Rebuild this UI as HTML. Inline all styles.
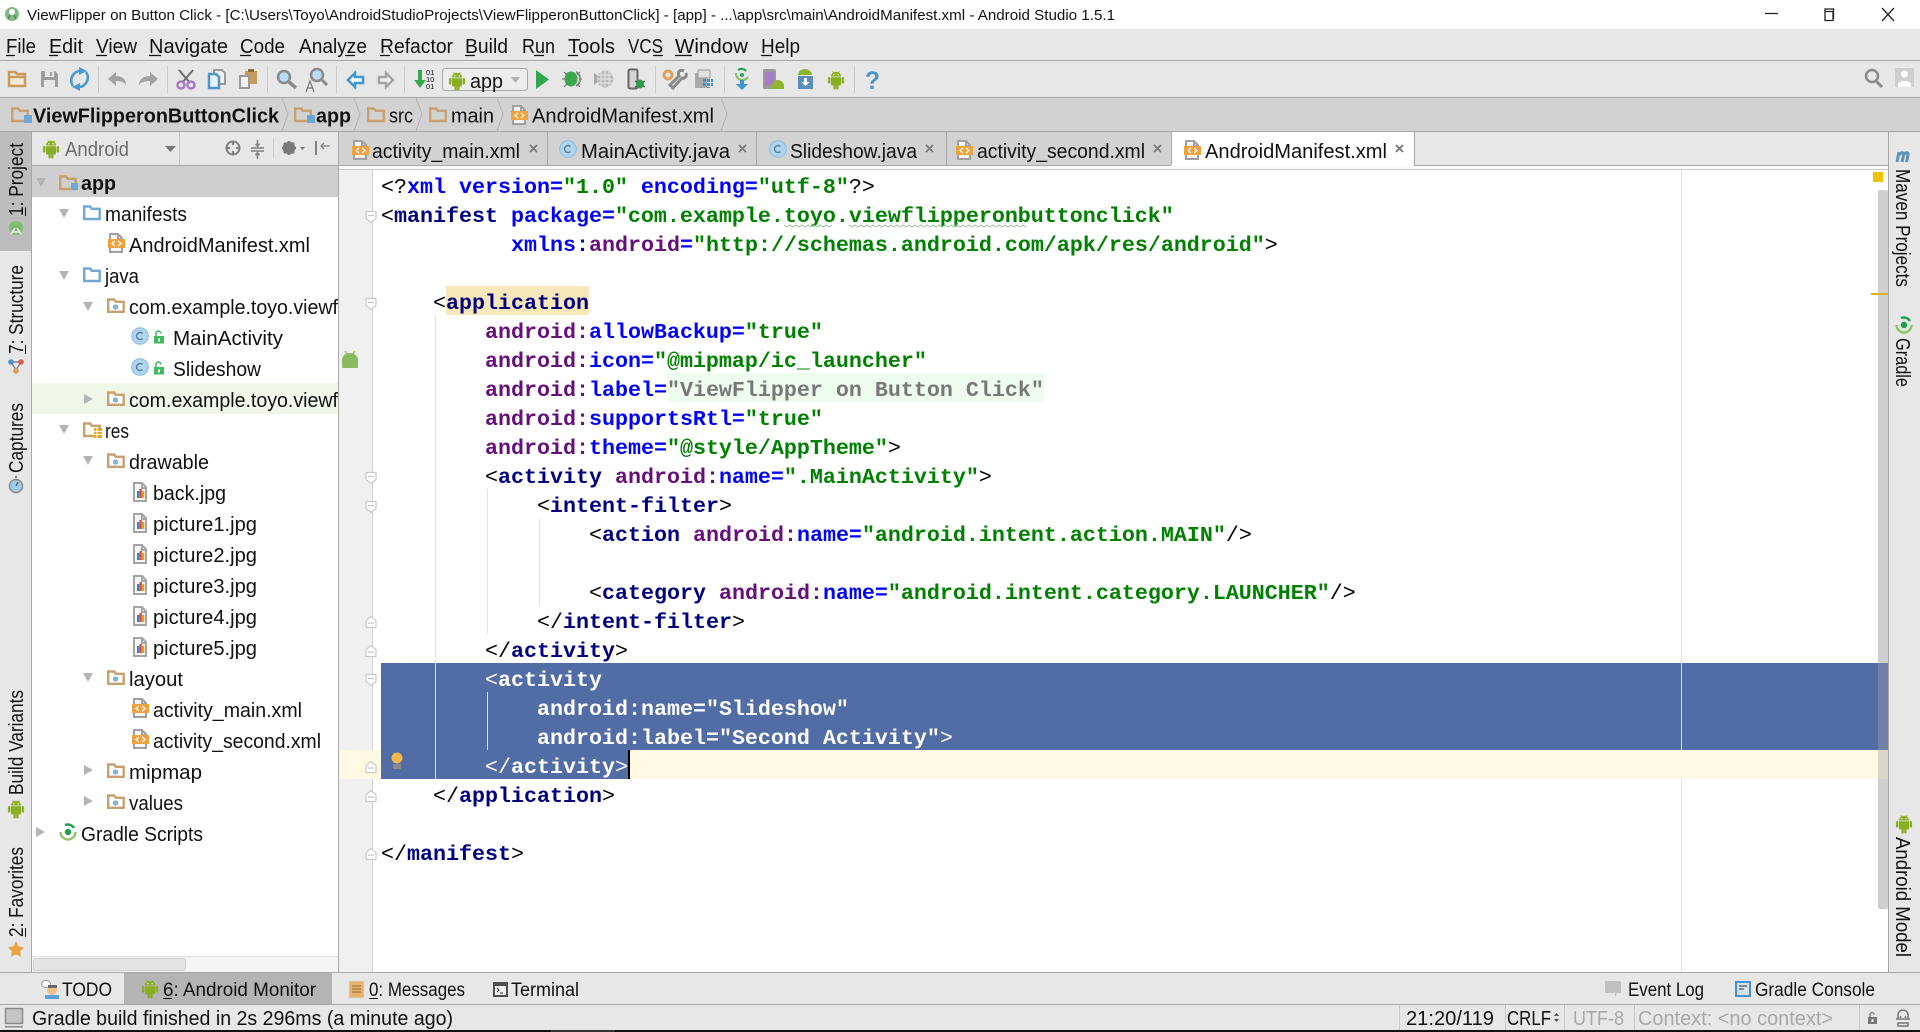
<!DOCTYPE html>
<html><head><meta charset="utf-8"><title>Android Studio</title>
<style>
html,body{margin:0;padding:0;background:#fff;overflow:hidden}
svg{display:block}
text{font-family:"Liberation Sans",Arial,sans-serif;font-size:20px;fill:#111;white-space:pre}
.c text,text.c{font-family:"Liberation Mono","Courier New",monospace;font-size:21.67px;font-weight:bold}
.p{fill:#000;font-weight:normal}.t{fill:#000080}.a{fill:#0000ff}.n{fill:#660e7a}.v{fill:#008000}.g{fill:#777}
.w text,.w tspan{fill:#fff}
</style></head><body>
<svg xmlns="http://www.w3.org/2000/svg" width="1920" height="1032" viewBox="0 0 1920 1032">
<defs>
<g id="droid"><g transform="scale(.85)"><path fill="#8aae22" d="M-6-3a6 5.500 0 0 1 12 0zM-6-2h12v8a1.500 1.500 0 0 1-1.500 1.500H3V11a1.400 1.400 0 0 1-2.800 0V7.500h-.4V11A1.400 1.400 0 0 1-3 11V7.500h-1.500A1.500 1.500 0 0 1-6 6zM-9.500-1a1.400 1.400 0 0 1 2.800 0v5a1.400 1.400 0 0 1-2.800 0zM6.700-1a1.400 1.400 0 0 1 2.800 0v5a1.400 1.400 0 0 1-2.800 0z"/><path stroke="#8aae22" d="M-4-9l1.500 2M4-9L2.500-7"/><circle cx="-2.500" cy="-5" r=".8" fill="#fff"/><circle cx="2.500" cy="-5" r=".8" fill="#fff"/></g></g>
<g id="xmlf"><path fill="#f4f4f4" stroke="#a0a0a0" stroke-width="2" d="M2 1h8l4 4v14H2z"/><path fill="#a0a0a0" d="M9 1h2v4h3v2H9z"/><rect x="0" y="6" width="17" height="9" fill="#f0a23c"/><path fill="none" stroke="#fff" stroke-width="1.200" d="M7 8l-3 2.500L7 13M10 8l3 2.500L10 13"/></g>
<g id="imgf"><path fill="#f6f6f6" stroke="#a4a4a4" stroke-width="2" d="M1 1h8l4 4v14H1z"/><path fill="#a4a4a4" d="M8 1h2v4h3v2H8z"/><rect x="4" y="9" width="2.300" height="7" fill="#3d7fc4"/><rect x="6.500" y="7" width="2.300" height="9" fill="#d84a3f"/><rect x="9" y="9" width="2.300" height="7" fill="#e0a030"/></g>
<g id="pkg"><path fill="#fff" stroke="#c8a070" stroke-width="2.400" d="M1.200 13.800V1.500h6l1.500 2.300h8v10z"/><rect x="6" y="6.500" width="5" height="5" rx="2" fill="#7fb4e0"/></g>
<g id="bfol"><path fill="#fff" stroke="#72a8d0" stroke-width="2.400" d="M1.200 14V1.500h6l1.500 2.300h8V14z"/></g>
<g id="tfol"><path fill="none" stroke="#c8a070" stroke-width="2.400" d="M1.200 14V1.500h6l1.500 2.300h8V14z"/></g>
<g id="cls"><circle r="8.300" fill="#aed5f0" stroke="#8cbbdc"/><path fill="none" stroke="#5c7f99" stroke-width="1.400" d="M2.500-2.500a3.500 3.500 0 1 0 0 5"/></g>
<g id="lock"><rect x="0" y="5" width="10" height="7.500" fill="#42b862"/><path fill="none" stroke="#42b862" stroke-width="1.600" d="M2 5V2.500a2.400 2.400 0 0 1 4.800 0"/><rect x="4" y="7.500" width="2" height="3" fill="#fff"/></g>
<path id="fd" fill="#fff" stroke="#c8c8c8" stroke-width="1.200" d="M-5-5.500h10v7l-5 4-5-4zM-3-1.500h6"/>
<path id="fu" fill="#fff" stroke="#c8c8c8" stroke-width="1.200" d="M-5 5.500h10v-7l-5-4-5 4zM-3 1h6"/>
<path id="dn" fill="#b4b4b4" d="M0 0h10L5 9z"/>
<path id="rt" fill="#b4b4b4" d="M0 0l9 5-9 5z"/>
<g id="grd"><circle r="3.200" fill="#1f9e4e"/><path fill="none" stroke="#8fc46a" stroke-width="2.400" d="M-7.500 0a7.500 7.500 0 0 0 15 0"/><path fill="none" stroke="#1f9e4e" stroke-width="2.400" d="M-3-7a7.500 7.500 0 0 1 9 3"/></g>
</defs>

<rect width="1920" height="1032" fill="#e7e7e7"/>
<!-- title bar -->
<rect width="1920" height="29" fill="#fff"/>
<circle cx="12" cy="14" r="7" fill="#86b98a"/><circle cx="12" cy="12" r="3" fill="#fff"/><path stroke="#4c8c4e" stroke-width="1.500" d="M8 19l2-4M16 19l-2-4"/>
<text x="27" y="20" font-size="15" style="font-size:15px" textLength="1088" lengthAdjust="spacingAndGlyphs">ViewFlipper on Button Click - [C:\Users\Toyo\AndroidStudioProjects\ViewFlipperonButtonClick] - [app] - ...\app\src\main\AndroidManifest.xml - Android Studio 1.5.1</text>
<path stroke="#222" stroke-width="1.300" fill="none" d="M1765 13.500h13M1825 11.500h8v9h-8zM1825 11.500v-2.500h8.500v9.500H1833M1882 8l12 13M1894 8l-12 13"/>

<!-- menu -->
<rect y="29" width="1920" height="31" fill="#e7e7e7"/>
<rect y="60" width="1920" height="1" fill="#a8a8a8"/>
<text x="6" y="53" textLength="30" lengthAdjust="spacingAndGlyphs">File</text>
<text x="49" y="53" textLength="34" lengthAdjust="spacingAndGlyphs">Edit</text>
<text x="96" y="53" textLength="41" lengthAdjust="spacingAndGlyphs">View</text>
<text x="149" y="53" textLength="79" lengthAdjust="spacingAndGlyphs">Navigate</text>
<text x="240" y="53" textLength="45" lengthAdjust="spacingAndGlyphs">Code</text>
<text x="299" y="53" textLength="68" lengthAdjust="spacingAndGlyphs">Analyze</text>
<text x="380" y="53" textLength="73" lengthAdjust="spacingAndGlyphs">Refactor</text>
<text x="465" y="53" textLength="43" lengthAdjust="spacingAndGlyphs">Build</text>
<text x="522" y="53" textLength="33" lengthAdjust="spacingAndGlyphs">Run</text>
<text x="568" y="53" textLength="47" lengthAdjust="spacingAndGlyphs">Tools</text>
<text x="628" y="53" textLength="35" lengthAdjust="spacingAndGlyphs">VCS</text>
<text x="675" y="53" textLength="73" lengthAdjust="spacingAndGlyphs">Window</text>
<text x="761" y="53" textLength="39" lengthAdjust="spacingAndGlyphs">Help</text>
<path stroke="#111" stroke-width="1.200" d="M6 55.500h9M49 55.500h9M96 55.500h11M149 55.500h12M240 55.500h11M345 55.500h10M380 55.500h10M465 55.500h10M534 55.500h10M568 55.500h10M653 55.500h10M675 55.500h17M761 55.500h11"/>

<!-- toolbar -->
<rect y="61" width="1920" height="36" fill="#e7e7e7"/>
<rect y="97" width="1920" height="1" fill="#a8a8a8"/>
<path stroke="#c9c9c9" d="M98.500 66v27M167.500 66v27M267.500 66v27M336.500 66v27M404.500 66v27M655.500 66v27M724.500 66v27M854.500 66v27"/>
<!-- folder --><path fill="#f5e9d8" stroke="#c99a5e" stroke-width="2.500" d="M9 86V72h6l2 2h8v12z"/><path stroke="#c99a5e" stroke-width="2.500" d="M9 77h16"/>
<!-- save --><path fill="#9c9c9c" d="M41 71h14l3 3v13H41z"/><rect x="45" y="71" width="9" height="6" fill="#e7e7e7"/><rect x="44" y="80" width="11" height="7" fill="#e7e7e7"/><rect x="50" y="72" width="2" height="4" fill="#9c9c9c"/>
<!-- sync --><path fill="none" stroke="#4a9ad0" stroke-width="2.600" d="M73 86a9.500 9.500 0 0 1 7-15M86 72a9.500 9.500 0 0 1-7 15"/><path fill="#4a9ad0" d="M79 67l8 4-8 4zM80 91l-8-4 8-4z"/>
<!-- undo --><path fill="#a2a2a2" d="M108 79l8-7v4c6 0 10 3 10 9-2-3-5-4-10-4v5z"/>
<!-- redo --><path fill="#a2a2a2" d="M158 79l-8-7v4c-6 0-11 3-11 9 2-3 6-4 11-4v5z"/>
<!-- cut --><path stroke="#6e6e6e" stroke-width="2" d="M179 70l11 13M193 70l-11 13"/><circle cx="181" cy="85" r="3.500" fill="none" stroke="#a878c8" stroke-width="2.500"/><circle cx="191" cy="85" r="3.500" fill="none" stroke="#a878c8" stroke-width="2.500"/>
<!-- copy --><path fill="#f2f2f2" stroke="#9a9a9a" stroke-width="2" d="M214 70h8l3 3v11h-11z"/><path fill="#e8f2fa" stroke="#4e94c8" stroke-width="2.500" d="M209 74h7l3 3v11h-10z"/>
<!-- paste --><rect x="245" y="71" width="12" height="13" fill="#c99a5e"/><rect x="248" y="69" width="6" height="3" fill="#8d6b3f"/><rect x="240" y="76" width="9" height="12" fill="#f2f2f2" stroke="#9a9a9a" stroke-width="2"/>
<!-- find --><circle cx="284" cy="77" r="6" fill="#bcdcf0" stroke="#8a8a8a" stroke-width="2.500"/><path stroke="#8a8a8a" stroke-width="3.500" d="M289 82l7 6"/>
<!-- replace --><circle cx="317" cy="75" r="6" fill="#bcdcf0" stroke="#8a8a8a" stroke-width="2.500"/><path stroke="#8a8a8a" stroke-width="3" d="M322 80l5 5"/><path fill="none" stroke="#777" stroke-width="1.200" d="M306 92l4-11 4 11M307.500 88h5"/>
<!-- back/fwd --><path fill="#fff" stroke="#3b96d2" stroke-width="2.500" d="M348 80l7-7v4h8v6h-8v4z"/><path fill="#f0f0f0" stroke="#a4a4a4" stroke-width="2.500" d="M393 80l-7-7v4h-7v6h7v4z"/>
<!-- make --><path fill="#3aa84a" d="M418 70h4v10h4l-6 8-6-8h4z"/>
<text x="426" y="75" style="font-size:7.500px" fill="#666">01</text><text x="426" y="82" style="font-size:7.500px" fill="#666">10</text><text x="426" y="89" style="font-size:7.500px" fill="#666">01</text>
<!-- combo --><rect x="442.500" y="68.500" width="85" height="22" rx="3" fill="#ededed" stroke="#a8a8a8"/>
<use href="#droid" x="457" y="80"/>
<text x="470" y="88" textLength="33" lengthAdjust="spacingAndGlyphs">app</text>
<path fill="#b0b0b0" d="M511 77h9l-4.500 6z"/>
<!-- run --><path fill="#31a84f" d="M536 70l13 9.500-13 9.500z"/>
<!-- debug --><ellipse cx="571" cy="79" rx="6.500" ry="7.500" fill="#39a84d"/><path stroke="#666" d="M564 72l3 3M580 72l-3 3M562 79h3M579 79h3M564 87l3-3M580 87l-3-3"/><path fill="none" stroke="#888" stroke-width="2" d="M576 72a8 8 0 0 1 0 14"/>
<!-- coverage --><path fill="#a8a8a8" d="M594 73l8 6-8 6z"/><circle cx="605" cy="79" r="8.500" fill="#bbb"/><path stroke="#e7e7e7" d="M597 75h16M597 79h16M597 83h16M601 71v16M605 71v16M609 71v16"/>
<!-- attach --><rect x="628.500" y="69.500" width="9" height="19" rx="1.500" fill="#d4d4d4" stroke="#666" stroke-width="2"/><ellipse cx="640" cy="84" rx="4" ry="4.500" fill="#2e9e44"/><path stroke="#444" d="M635 81l2 1M645 81l-2 1M635 87l2-1M645 87l-2-1"/>
<!-- sdk settings --><circle cx="668" cy="75" r="4" fill="none" stroke="#e0a060" stroke-width="3"/><path fill="none" stroke="#8a8a8a" stroke-width="3" d="M684 71c-4-2-7 1-5 5l-9 9 3 3 9-10c3 1 5-2 4-5"/>
<!-- structure --><rect x="695" y="73" width="12" height="15" fill="#aaa"/><rect x="698" y="70" width="12" height="8" fill="#e0e0e0" stroke="#999"/><path fill="#3f94cc" d="M703 79h3v3h-3zM707 79h3v3h-3zM711 79h2v3h-2zM703 83h3v3h-3zM707 83h3v3h-3zM711 83h2v3h-2zM707 87h3v1h-3z"/>
<!-- sync gradle --><circle cx="742" cy="75" r="2" fill="#27a35a"/><path fill="none" stroke="#86c46e" stroke-width="2.200" d="M736 73a6.500 6.500 0 0 0 12 4"/><path fill="none" stroke="#27a35a" stroke-width="2.200" d="M738 70a6 6 0 0 1 8 1"/><path fill="#3c96d0" d="M740 80h4v4h4l-6 6-6-6h4z"/>
<!-- avd --><rect x="763" y="69" width="13" height="20" rx="1.500" fill="#9a9a9a"/><rect x="765" y="72" width="9" height="13" fill="#a87cc8"/><path fill="#8fb52e" d="M772 89v-3a6 6 0 0 1 12 0v3z"/>
<!-- sdk --><path fill="#8fb52e" d="M798 75a7 6 0 0 1 14 0z"/><rect x="798" y="76" width="15" height="13" fill="#5a8db8"/><path fill="#fff" d="M804 78h3v4h2.500l-4 4-4-4h2.500z"/>
<use href="#droid" x="836" y="79"/>
<text x="865" y="89" style="font-size:25px;font-weight:bold;fill:#4a94cc" textLength="15" lengthAdjust="spacingAndGlyphs">?</text>
<circle cx="1872" cy="76" r="6" fill="none" stroke="#8a8a8a" stroke-width="2.500"/><path stroke="#8a8a8a" stroke-width="3" d="M1876 81l6 6"/>
<rect x="1895" y="68" width="19" height="19" fill="#cfcfcf"/><circle cx="1904.500" cy="74" r="3.500" fill="#fff"/><path fill="#fff" d="M1898 87v-3c0-4 13-4 13 0v3z"/>

<!-- navbar -->
<rect y="98" width="1920" height="33" fill="#d2d2d2"/>
<rect y="131" width="1920" height="1" fill="#a8a8a8"/>
<path fill="none" stroke="#b2b2b2" d="M282 98l6 16-6 17M354 98l6 16-6 17M416 98l6 16-6 17M497 98l6 16-6 17M721 98l6 16-6 17"/>
<use href="#tfol" x="11" y="107"/><rect x="24" y="115" width="8" height="8" fill="#6aa8d8"/>
<text x="33" y="122.500" font-weight="bold" textLength="246" lengthAdjust="spacingAndGlyphs">ViewFlipperonButtonClick</text>
<use href="#tfol" x="294" y="107"/><rect x="307" y="115" width="8" height="8" fill="#6aa8d8"/>
<text x="316" y="122.500" font-weight="bold" textLength="35" lengthAdjust="spacingAndGlyphs">app</text>
<use href="#tfol" transform="translate(367 107)"/><text x="389" y="122.500" textLength="24" lengthAdjust="spacingAndGlyphs">src</text>
<use href="#tfol" transform="translate(429 107)"/><text x="451" y="122.500" textLength="43" lengthAdjust="spacingAndGlyphs">main</text>
<use href="#xmlf" x="511" y="105"/>
<text x="532" y="122.500" textLength="182" lengthAdjust="spacingAndGlyphs">AndroidManifest.xml</text>

<!-- tabs row -->
<rect y="132" x="32" width="1856" height="33" fill="#e7e7e7"/>
<rect x="339" y="132" width="608" height="33" fill="#d2d2d2"/>
<rect x="947" y="132" width="224" height="33" fill="#d2d2d2"/>
<rect x="1171" y="132" width="243" height="34" fill="#fff"/>
<rect x="32" y="165" width="1856" height="1" fill="#a8a8a8"/>
<rect x="1171" y="165" width="243" height="1" fill="#fff"/>
<rect x="339" y="166" width="1549" height="3" fill="#fafafa"/>
<rect x="339" y="169" width="1549" height="1" fill="#cdcdcd"/>
<path stroke="#a8a8a8" d="M547.500 132v33M756.500 132v33M946.500 132v33M1171.500 132v33M1414.500 132v33"/>
<use href="#xmlf" x="352" y="140"/><text x="372" y="158" textLength="148" lengthAdjust="spacingAndGlyphs">activity_main.xml</text>
<use href="#cls" x="568" y="149"/><text x="581" y="158" textLength="149" lengthAdjust="spacingAndGlyphs">MainActivity.java</text>
<use href="#cls" x="778" y="149"/><text x="790" y="158" textLength="127" lengthAdjust="spacingAndGlyphs">Slideshow.java</text>
<use href="#xmlf" x="956" y="140"/><text x="977" y="158" textLength="168" lengthAdjust="spacingAndGlyphs">activity_second.xml</text>
<use href="#xmlf" x="1184" y="140"/><text x="1205" y="158" textLength="182" lengthAdjust="spacingAndGlyphs">AndroidManifest.xml</text>
<path stroke="#777" stroke-width="1.800" d="M530 145l7 7M537 145l-7 7M739 145l7 7M746 145l-7 7M926 145l7 7M933 145l-7 7M1154 145l7 7M1161 145l-7 7M1396 145l7 7M1403 145l-7 7"/>

<!-- left side strip -->
<rect y="132" width="31" height="840" fill="#e7e7e7"/>
<rect y="132" width="31" height="119" fill="#bdbdbd"/>
<rect x="31" y="132" width="1" height="840" fill="#a8a8a8"/>
<text transform="translate(23 216) rotate(-90)" textLength="73" lengthAdjust="spacingAndGlyphs">1: Project</text>
<path stroke="#111" d="M25.500 216v-9M25.500 354v-9M25.500 937v-9"/>
<circle cx="16" cy="228" r="7" fill="#7fbe6e"/><path stroke="#eee" stroke-width="1.500" d="M11 234l4-6M21 234l-4-6M12 232h8"/>
<text transform="translate(23 354) rotate(-90)" textLength="89" lengthAdjust="spacingAndGlyphs">7: Structure</text>
<path stroke="#8a8a8a" stroke-width="1.500" fill="none" d="M11 362l5 8 5-8z"/><circle cx="11" cy="362" r="2.800" fill="#4a90d0"/><circle cx="21" cy="362" r="2.800" fill="#d85a4a"/><circle cx="16" cy="371" r="2.800" fill="#e0a050"/>
<text transform="translate(23 473) rotate(-90)" textLength="70" lengthAdjust="spacingAndGlyphs">Captures</text>
<circle cx="16" cy="486" r="6.500" fill="#9ecbe8" stroke="#8a8a8a" stroke-width="1.500"/><path stroke="#555" stroke-width="1.300" d="M16 486l2-4M16 478v-2"/>
<text transform="translate(23 795) rotate(-90)" textLength="105" lengthAdjust="spacingAndGlyphs">Build Variants</text>
<use href="#droid" x="16" y="808"/>
<text transform="translate(23 937) rotate(-90)" textLength="90" lengthAdjust="spacingAndGlyphs">2: Favorites</text>
<path fill="#e8a33d" d="M16 941l2.500 5.500 5.500.7-4 4 1 5.800-5-2.900-5 2.900 1-5.800-4-4 5.500-.7z"/>

<!-- project panel -->
<rect x="32" y="166" width="306" height="806" fill="#fff"/>
<rect x="338" y="132" width="1" height="840" fill="#a8a8a8"/>
<rect x="179" y="132" width="1" height="33" fill="#c4c4c4"/>
<use href="#droid" x="51" y="148"/>
<text x="65" y="156" textLength="64" lengthAdjust="spacingAndGlyphs" style="fill:#6c6c6c">Android</text>
<path fill="#777" d="M165 146h11l-5.500 6z"/>
<circle cx="233" cy="148" r="6.500" fill="none" stroke="#808080" stroke-width="2"/><path stroke="#808080" stroke-width="2" d="M233 141v4M233 151v4M226 148h4M236 148h4"/>
<path stroke="#808080" stroke-width="1.600" fill="none" d="M251 148h13M251 151h13M257.500 140v6l-2-2M257.500 146l2-2M257.500 159v-6l-2 2M257.500 153l2 2"/>
<path stroke="#ccc" d="M273.500 138v20"/>
<circle cx="289" cy="148" r="4.500" fill="none" stroke="#787878" stroke-width="3.500"/><path stroke="#787878" stroke-width="2.500" d="M289 141v14M282 148h14M284 143l10 10M294 143l-10 10"/><path fill="#787878" d="M300 147h5l-2.500 3z"/>
<path stroke="#808080" stroke-width="2" fill="none" d="M316 141v14"/><path stroke="#808080" stroke-width="1.300" fill="none" d="M330 146h-9M324 143l-3 3 3 3"/>

<!-- tree -->
<rect x="32" y="166" width="306" height="31" fill="#cfcfcf"/>
<rect x="32" y="383" width="306" height="31" fill="#f0f7e9"/>
<use href="#dn" x="36" y="178"/><use href="#tfol" x="59" y="175"/><rect x="71" y="183" width="7" height="7" fill="#6aa8d8"/>
<text x="81" y="190" font-weight="bold" textLength="35" lengthAdjust="spacingAndGlyphs">app</text>
<use href="#dn" x="59" y="209"/><use href="#bfol" x="83" y="205"/><text x="105" y="221" textLength="82" lengthAdjust="spacingAndGlyphs">manifests</text>
<use href="#xmlf" x="108" y="233"/><text x="129" y="252" textLength="181" lengthAdjust="spacingAndGlyphs">AndroidManifest.xml</text>
<use href="#dn" x="59" y="271"/><use href="#bfol" x="83" y="267"/><text x="105" y="283" textLength="34" lengthAdjust="spacingAndGlyphs">java</text>
<use href="#dn" x="83" y="302"/><use href="#pkg" x="107" y="298"/><text x="129" y="314" textLength="209" lengthAdjust="spacingAndGlyphs">com.example.toyo.viewf</text>
<use href="#cls" x="140" y="336"/><use href="#lock" x="154" y="331"/><text x="173" y="345" textLength="110" lengthAdjust="spacingAndGlyphs">MainActivity</text>
<use href="#cls" x="140" y="367"/><use href="#lock" x="154" y="362"/><text x="173" y="376" textLength="88" lengthAdjust="spacingAndGlyphs">Slideshow</text>
<use href="#rt" x="84" y="394"/><use href="#pkg" x="107" y="391"/><text x="129" y="407" textLength="209" lengthAdjust="spacingAndGlyphs">com.example.toyo.viewf</text>
<use href="#dn" x="59" y="425"/><use href="#tfol" x="83" y="422"/><path fill="#e8a820" d="M94 428h8v10h-8z"/><path stroke="#fff" d="M94 431.500h8M94 434.500h8M97 428v10"/><text x="105" y="438" textLength="24" lengthAdjust="spacingAndGlyphs">res</text>
<use href="#dn" x="83" y="456"/><use href="#pkg" x="107" y="453"/><text x="129" y="469" textLength="80" lengthAdjust="spacingAndGlyphs">drawable</text>
<use href="#imgf" x="133" y="482"/><text x="153" y="500" textLength="73" lengthAdjust="spacingAndGlyphs">back.jpg</text>
<use href="#imgf" x="133" y="513"/><text x="153" y="531" textLength="104" lengthAdjust="spacingAndGlyphs">picture1.jpg</text>
<use href="#imgf" x="133" y="544"/><text x="153" y="562" textLength="104" lengthAdjust="spacingAndGlyphs">picture2.jpg</text>
<use href="#imgf" x="133" y="575"/><text x="153" y="593" textLength="104" lengthAdjust="spacingAndGlyphs">picture3.jpg</text>
<use href="#imgf" x="133" y="606"/><text x="153" y="624" textLength="104" lengthAdjust="spacingAndGlyphs">picture4.jpg</text>
<use href="#imgf" x="133" y="637"/><text x="153" y="655" textLength="104" lengthAdjust="spacingAndGlyphs">picture5.jpg</text>
<use href="#dn" x="83" y="673"/><use href="#pkg" x="107" y="670"/><text x="129" y="686" textLength="54" lengthAdjust="spacingAndGlyphs">layout</text>
<use href="#xmlf" x="132" y="698"/><text x="153" y="717" textLength="149" lengthAdjust="spacingAndGlyphs">activity_main.xml</text>
<use href="#xmlf" x="132" y="729"/><text x="153" y="748" textLength="168" lengthAdjust="spacingAndGlyphs">activity_second.xml</text>
<use href="#rt" x="84" y="765"/><use href="#pkg" x="107" y="763"/><text x="129" y="779" textLength="73" lengthAdjust="spacingAndGlyphs">mipmap</text>
<use href="#rt" x="84" y="796"/><use href="#pkg" x="107" y="794"/><text x="129" y="810" textLength="54" lengthAdjust="spacingAndGlyphs">values</text>
<use href="#rt" x="36" y="827"/><use href="#grd" x="68" y="832"/><text x="81" y="841" textLength="122" lengthAdjust="spacingAndGlyphs">Gradle Scripts</text>
<rect x="32" y="956" width="306" height="16" fill="#f5f5f5"/><rect x="32" y="956" width="306" height="1" fill="#e2e2e2"/>
<rect x="33.500" y="958.500" width="152" height="12" rx="2" fill="#e4e4e4" stroke="#cfcfcf"/>

<!-- editor -->
<rect x="339" y="170" width="1549" height="802" fill="#fff"/>
<rect x="339" y="170" width="33" height="802" fill="#f0f0f0"/>
<rect x="372" y="170" width="1" height="802" fill="#d4d4d4"/>
<rect x="339" y="750" width="1549" height="29" fill="#fff8e2"/>
<rect x="381" y="663" width="1507" height="87" fill="#526da5"/>
<rect x="381" y="750" width="247" height="29" fill="#526da5"/>
<rect x="667" y="373" width="377" height="29" fill="#edfcec"/>
<rect x="446" y="286" width="143" height="29" fill="#f8e8b9"/>
<path stroke="#e2e2e2" d="M1681.500 170V663M1681.500 779V972M435.500 315V663M487.500 489V634M539.500 518V605"/>
<path stroke="#dbe2f0" d="M1681.500 663V750M435.500 663V779M487.500 692V750"/>
<path stroke="#8abb60" stroke-width="1.200" d="M345 351l2 3M355 351l-2 3"/><path fill="#8abb60" d="M342 367v-7a8 7 0 0 1 16 0v7a1 1 0 0 1-1 1h-14a1 1 0 0 1-1-1z"/>
<circle cx="397" cy="758" r="5.500" fill="#f2b84a"/><rect x="393" y="764" width="8" height="5" fill="#8a8a8a"/>
<use href="#fd" x="371" y="217"/><use href="#fd" x="371" y="304"/><use href="#fd" x="371" y="478"/><use href="#fd" x="371" y="507"/>
<use href="#fu" x="371" y="622"/><use href="#fu" x="371" y="651"/><use href="#fd" x="371" y="680"/><use href="#fu" x="371" y="767"/><use href="#fu" x="371" y="796"/><use href="#fu" x="371" y="854"/>
<g class="c">
<text x="381" y="193"><tspan class="p">&lt;?</tspan><tspan class="a">xml version=</tspan><tspan class="v">"1.0"</tspan><tspan class="a"> encoding=</tspan><tspan class="v">"utf-8"</tspan><tspan class="p">?&gt;</tspan></text>
<text x="381" y="222"><tspan class="p">&lt;</tspan><tspan class="t">manifest </tspan><tspan class="a">package=</tspan><tspan class="v">"com.example.toyo.viewflipperonbuttonclick"</tspan></text>
<text x="511" y="251"><tspan class="a">xmlns:</tspan><tspan class="n">android</tspan><tspan class="a">=</tspan><tspan class="v">"http://schemas.android.com/apk/res/android"</tspan><tspan class="p">&gt;</tspan></text>
<text x="433" y="309"><tspan class="p">&lt;</tspan><tspan class="t">application</tspan></text>
<text x="485" y="338"><tspan class="n">android:</tspan><tspan class="a">allowBackup=</tspan><tspan class="v">"true"</tspan></text>
<text x="485" y="367"><tspan class="n">android:</tspan><tspan class="a">icon=</tspan><tspan class="v">"@mipmap/ic_launcher"</tspan></text>
<text x="485" y="396"><tspan class="n">android:</tspan><tspan class="a">label=</tspan><tspan class="g">"ViewFlipper on Button Click"</tspan></text>
<text x="485" y="425"><tspan class="n">android:</tspan><tspan class="a">supportsRtl=</tspan><tspan class="v">"true"</tspan></text>
<text x="485" y="454"><tspan class="n">android:</tspan><tspan class="a">theme=</tspan><tspan class="v">"@style/AppTheme"</tspan><tspan class="p">&gt;</tspan></text>
<text x="485" y="483"><tspan class="p">&lt;</tspan><tspan class="t">activity </tspan><tspan class="n">android:</tspan><tspan class="a">name=</tspan><tspan class="v">".MainActivity"</tspan><tspan class="p">&gt;</tspan></text>
<text x="537" y="512"><tspan class="p">&lt;</tspan><tspan class="t">intent-filter</tspan><tspan class="p">&gt;</tspan></text>
<text x="589" y="541"><tspan class="p">&lt;</tspan><tspan class="t">action </tspan><tspan class="n">android:</tspan><tspan class="a">name=</tspan><tspan class="v">"android.intent.action.MAIN"</tspan><tspan class="p">/&gt;</tspan></text>
<text x="589" y="599"><tspan class="p">&lt;</tspan><tspan class="t">category </tspan><tspan class="n">android:</tspan><tspan class="a">name=</tspan><tspan class="v">"android.intent.category.LAUNCHER"</tspan><tspan class="p">/&gt;</tspan></text>
<text x="537" y="628"><tspan class="p">&lt;/</tspan><tspan class="t">intent-filter</tspan><tspan class="p">&gt;</tspan></text>
<text x="485" y="657"><tspan class="p">&lt;/</tspan><tspan class="t">activity</tspan><tspan class="p">&gt;</tspan></text>
<g class="w">
<text x="485" y="686"><tspan font-weight="normal">&lt;</tspan>activity</text>
<text x="537" y="715">android:name="Slideshow"</text>
<text x="537" y="744">android:label="Second Activity"<tspan font-weight="normal">&gt;</tspan></text>
<text x="485" y="773"><tspan font-weight="normal">&lt;/</tspan>activity<tspan font-weight="normal">&gt;</tspan></text>
</g>
<text x="433" y="802"><tspan class="p">&lt;/</tspan><tspan class="t">application</tspan><tspan class="p">&gt;</tspan></text>
<text x="381" y="860"><tspan class="p">&lt;/</tspan><tspan class="t">manifest</tspan><tspan class="p">&gt;</tspan></text>
</g>
<path fill="none" stroke="#9dc29d" d="M784 225l3 2 3-2 3 2 3-2 3 2 3-2 3 2 3-2 3 2 3-2 3 2 3-2 3 2 3-2 3 2 3-2M849 225l3 2 3-2 3 2 3-2 3 2 3-2 3 2 3-2 3 2 3-2 3 2 3-2 3 2 3-2 3 2 3-2 3 2 3-2 3 2 3-2 3 2 3-2 3 2 3-2 3 2 3-2 3 2 3-2 3 2 3-2 3 2 3-2 3 2 3-2 3 2 3-2 3 2 3-2 3 2 3-2 3 2 3-2 3 2 3-2 3 2 3-2 3 2 3-2 3 2 3-2 3 2 3-2 3 2 3-2 3 2 3-2 3 2 3-2 3 2"/>
<rect x="628" y="750" width="2" height="29" fill="#000"/>
<!-- translucent scrollbar -->
<rect x="1878" y="190" width="10" height="719" rx="2" fill="#cfcfcf"/>
<rect x="1878" y="663" width="10" height="87" fill="#7080a6"/>
<rect x="1878" y="750" width="10" height="29" fill="#dbd7c7"/>
<rect x="1873" y="172" width="10" height="10" fill="#efc300"/>
<rect x="1871" y="293" width="17" height="2" fill="#e0b21a"/>

<!-- right strip -->
<rect x="1888" y="132" width="1" height="840" fill="#a8a8a8"/>
<rect x="1889" y="132" width="31" height="840" fill="#e7e7e7"/>
<path fill="none" stroke="#5f94b4" stroke-width="3" d="M1897 162l2-10M1899 155c2-3 5-3 4.500 0l-1.500 7M1903.500 155c2-3 5-3 4.500 0l-1.500 7"/>
<text transform="translate(1896 169) rotate(90)" textLength="118" lengthAdjust="spacingAndGlyphs">Maven Projects</text>
<use href="#grd" x="1904" y="325"/>
<text transform="translate(1896 338) rotate(90)" textLength="49" lengthAdjust="spacingAndGlyphs">Gradle</text>
<use href="#droid" transform="translate(1904 823)"/>
<text transform="translate(1896 837) rotate(90)" textLength="120" lengthAdjust="spacingAndGlyphs">Android Model</text>

<!-- bottom tool bar -->
<rect y="972" width="1920" height="1" fill="#a8a8a8"/>
<rect y="973" width="1920" height="31" fill="#e7e7e7"/>
<rect x="124" y="973" width="208" height="31" fill="#b4b4b4"/>
<rect y="1004" width="1920" height="1" fill="#a8a8a8"/>
<circle cx="52" cy="990" r="5" fill="#f0c088"/><rect x="45" y="995" width="14" height="4" fill="#5aa0d8"/><ellipse cx="46" cy="984" rx="4.500" ry="3.500" fill="#fff" stroke="#999"/><path fill="#666" d="M48 985h9v3h-9z"/>
<text x="62" y="996" style="font-size:19px" textLength="50" lengthAdjust="spacingAndGlyphs">TODO</text>
<use href="#droid" x="150" y="988"/>
<text x="163" y="996" style="font-size:19px" textLength="153" lengthAdjust="spacingAndGlyphs">6: Android Monitor</text>
<path stroke="#111" d="M163 998.500h9M369 998.500h9"/>
<rect x="349" y="981" width="15" height="17" fill="#eab06a" stroke="#d8d8d8"/><path stroke="#8a6a3a" d="M352 986h9M352 989h9M352 992h9"/>
<text x="369" y="996" style="font-size:19px" textLength="96" lengthAdjust="spacingAndGlyphs">0: Messages</text>
<rect x="493" y="982" width="15" height="15" fill="#4f4f4f"/><rect x="495" y="986" width="11" height="9" fill="#eee"/><path stroke="#333" fill="none" d="M497 988l2 2-2 2M500 993h3"/>
<text x="511" y="996" style="font-size:19px" textLength="68" lengthAdjust="spacingAndGlyphs">Terminal</text>
<path fill="#c0c0c0" d="M1606 981h14a1 1 0 0 1 1 1v11h-4l-2 4v-4h-9a1 1 0 0 1-1-1v-10a1 1 0 0 1 1-1z"/>
<text x="1628" y="996" style="font-size:19px" textLength="76" lengthAdjust="spacingAndGlyphs">Event Log</text>
<rect x="1736" y="982" width="14" height="14" fill="#d0e2ef" stroke="#4a90c8" stroke-width="2"/><path stroke="#6a6a6a" stroke-width="1.500" d="M1739 986h8M1739 989h5"/>
<text x="1755" y="996" style="font-size:19px" textLength="120" lengthAdjust="spacingAndGlyphs">Gradle Console</text>

<!-- status -->
<rect y="1005" width="1920" height="25" fill="#e7e7e7"/>
<rect y="1030" width="1920" height="2" fill="#111"/>
<rect x="551" y="1030" width="64" height="2" fill="#333"/>
<rect x="5.500" y="1008.500" width="17" height="15" fill="#c4c4c4" stroke="#8a8a8a" stroke-width="1.500"/><rect x="5" y="1026" width="18" height="1.500" fill="#8a8a8a"/>
<text x="32" y="1025" textLength="421" lengthAdjust="spacingAndGlyphs">Gradle build finished in 2s 296ms (a minute ago)</text>
<path stroke="#c8c8c8" d="M1399.500 1005v25M1505.500 1005v25M1564.500 1005v25M1634.500 1005v25M1859.500 1005v25"/>
<text x="1406" y="1025" textLength="88" lengthAdjust="spacingAndGlyphs">21:20/119</text>
<text x="1507" y="1025" textLength="44" lengthAdjust="spacingAndGlyphs">CRLF</text>
<path fill="#555" d="M1554 1016l2.500-3 2.500 3zM1554 1019l2.500 3 2.500-3z"/>
<text x="1573" y="1025" textLength="51" lengthAdjust="spacingAndGlyphs" style="fill:#a8a8a8">UTF-8</text>
<text x="1638" y="1025" textLength="195" lengthAdjust="spacingAndGlyphs" style="fill:#a8a8a8">Context: &lt;no context&gt;</text>
<rect x="1868" y="1017" width="9" height="7" fill="#777"/><path fill="none" stroke="#777" stroke-width="1.300" d="M1870 1017v-2.500a2 2 0 0 1 4 0"/><rect x="1871.500" y="1019" width="2" height="3" fill="#e7e7e7"/>
<path fill="none" stroke="#777" stroke-width="1.500" d="M1898 1015a5 5 0 0 1 10 0v4h-10zM1896 1019h14M1898 1023h10v3h-10z"/><circle cx="1900.500" cy="1017" r="1" fill="#777"/><circle cx="1905.500" cy="1017" r="1" fill="#777"/>
</svg>
</body></html>
